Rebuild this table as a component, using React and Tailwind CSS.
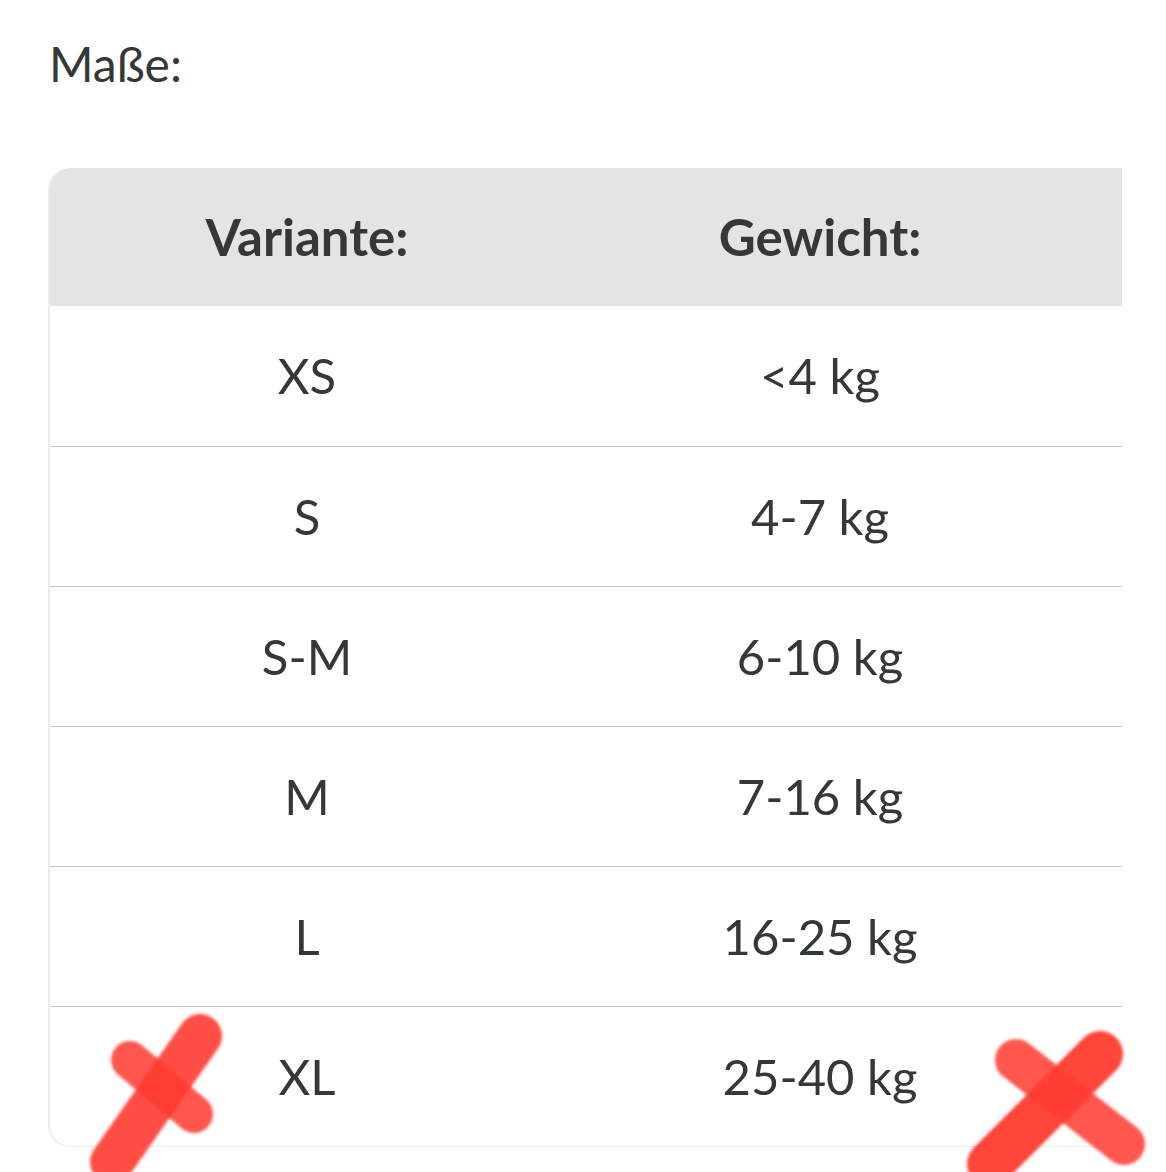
import React from "react";

const rows = [
  { size: "XS", weight: "<4 kg" },
  { size: "S", weight: "4-7 kg" },
  { size: "S-M", weight: "6-10 kg" },
  { size: "M", weight: "7-16 kg" },
  { size: "L", weight: "16-25 kg" },
  { size: "XL", weight: "25-40 kg" },
];

// hand drawn red crosses laid over the last row
const Marks = () => (
  <svg
    className="absolute left-0 top-0 pointer-events-none"
    width="1166"
    height="1172"
    viewBox="0 0 1166 1172"
  >
    <defs>
      <filter id="soft" x="-20%" y="-20%" width="140%" height="140%">
        <feGaussianBlur stdDeviation="1.6" />
      </filter>
    </defs>
    <g filter="url(#soft)" strokeLinecap="round" strokeLinejoin="round" fill="none">
      <line x1="130" y1="1060" x2="194" y2="1114" stroke="#ff3b30" strokeWidth="38" opacity="0.85" />
      <line x1="200" y1="1036" x2="112" y2="1162" stroke="#ff3b30" strokeWidth="44" opacity="0.9" />
      <line x1="1016" y1="1060" x2="1124" y2="1144" stroke="#ff3b30" strokeWidth="42" opacity="0.85" />
      <line x1="1100" y1="1054" x2="990" y2="1164" stroke="#ff3b30" strokeWidth="46" opacity="0.95" />
    </g>
  </svg>
);

const App = () => {
  return (
    <div
      className="relative w-[1166px] h-[1172px] bg-white overflow-hidden text-[#343836]"
      style={{ fontFamily: 'Lato, "Noto Sans", sans-serif' }}
    >
      <div className="pl-[49px] pt-[30px]">
        <h1 className="text-[48px] leading-[68px]">Maße:</h1>
      </div>
      <div className="mt-[70px] ml-[48px] w-[1074px] rounded-l-[22px] border-l-2 border-b border-[#ececec] overflow-hidden">
        <div className="grid grid-cols-[514px_512px_1fr] h-[138px] items-center bg-[#e2e6e3] font-bold text-[51px]">
          <div className="text-center">Variante:</div>
          <div className="text-center">Gewicht:</div>
          <div />
        </div>
        {rows.map((row, i) => (
          <div
            key={row.size}
            className={
              "grid grid-cols-[514px_512px_1fr] h-[140px] items-center text-[49px] " +
              (i > 0 ? "border-t border-[#c8c8c8]" : "")
            }
          >
            <div className="text-center">{row.size}</div>
            <div className="text-center">{row.weight}</div>
            <div />
          </div>
        ))}
      </div>
      <Marks />
    </div>
  );
};

export default App;
